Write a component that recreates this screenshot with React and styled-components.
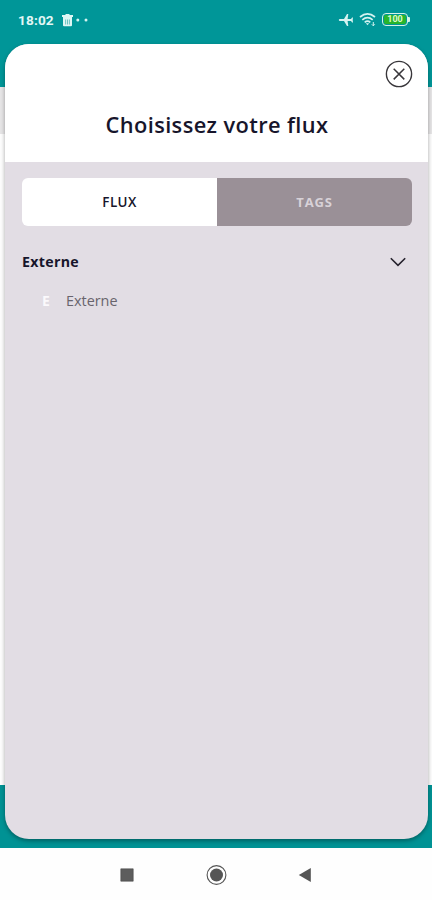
import React from 'react';
import styled, { createGlobalStyle } from 'styled-components';

const GlobalStyle = createGlobalStyle`
  * { box-sizing: border-box; }
  body { margin: 0; background: #fefefe; font-family: "Open Sans", "Noto Sans", sans-serif; }
  button { border: 0; padding: 0; background: none; font: inherit; cursor: pointer; }
  svg { display: block; }
`;

const Phone = styled.div`
  position: relative;
  width: 432px;
  height: 900px;
  overflow: hidden;
  display: flex;
  flex-direction: column;
`;

const AppHeader = styled.header`
  height: 87px;
  background: #009698;
`;

const StatusBar = styled.div`
  height: 39px;
  padding: 0 22px 0 18px;
  display: flex;
  align-items: center;
  justify-content: space-between;
  color: #e2f7f5;
`;

const StatusGroup = styled.div`
  display: flex;
  align-items: center;
  gap: ${({ $gap }) => $gap}px;
`;

const Clock = styled.span`
  width: 36px;
  font: 700 13.6px/20px Roboto, sans-serif;
  letter-spacing: 0.15px;
  white-space: nowrap;
`;

const Battery = styled.div`
  display: flex;
  align-items: center;
  &::after {
    content: "";
    width: 2px;
    height: 5px;
    background: #d5f3e5;
    border-radius: 0 1px 1px 0;
  }
`;

const BatteryLevel = styled.span`
  width: 26px;
  height: 13px;
  padding: 1px;
  border: 1.5px solid #d5f3e5;
  border-radius: 4px;
  background: #27b52b;
  background-clip: content-box;
  color: #dcf8cf;
  font: 700 9px/9px Roboto, sans-serif;
  text-align: center;
`;

const FilterStrip = styled.div`
  height: 47px;
  background: #e6e5e6;
`;

const Feed = styled.div`
  flex: 1;
  background: #fdfdfd;
`;

const TabBar = styled.div`
  height: 63px;
  background: #009294;
`;

const NavBar = styled.nav`
  height: 52px;
  padding: 1px 120px 0 120px;
  display: flex;
  align-items: center;
  justify-content: space-between;
  background: #fefefe;
`;

const Sheet = styled.section`
  position: absolute;
  top: 44px;
  left: 5px;
  right: 4px;
  height: 795px;
  display: flex;
  flex-direction: column;
  border-radius: 24px;
  overflow: hidden;
  background: #e2dde4;
  box-shadow: 0 2px 4px rgba(0, 0, 0, 0.34);
`;

const SheetHeader = styled.header`
  height: 118px;
  padding: 16px 15px 0 16px;
  display: flex;
  flex-direction: column;
  background: #fff;
`;

const CloseButton = styled.button`
  align-self: flex-end;
  width: 28px;
  height: 28px;
`;

const Title = styled.h1`
  margin: 22px 0 0;
  color: #17152b;
  font-size: 21.8px;
  font-weight: 640;
  line-height: 30px;
  letter-spacing: 0.4px;
  text-align: center;
  white-space: nowrap;
`;

const SheetBody = styled.div`
  padding: 16px 16px 16px 17px;
`;

const Tabs = styled.div`
  height: 48px;
  margin-bottom: 1px;
  display: grid;
  grid-template-columns: 195px 1fr;
  border-radius: 6px;
  overflow: hidden;
`;

const Tab = styled.button`
  background: ${({ $active }) => ($active ? '#fff' : '#9a9097')};
  && {
    color: ${({ $active }) => ($active ? '#17152b' : '#d8d2d8')};
    font: ${({ $active }) => ($active ? '650 13.4px' : '700 13px')}/20px "Open Sans", sans-serif;
    letter-spacing: ${({ $active }) => ($active ? '0.4px' : '0.85px')};
  }
`;

const GroupHeader = styled.div`
  height: 70px;
  padding-right: 6px;
  display: flex;
  align-items: center;
  justify-content: space-between;
`;

const GroupTitle = styled.h2`
  margin: 0;
  color: #17152b;
  font-size: 14.2px;
  font-weight: 700;
  line-height: 20px;
  letter-spacing: 0.3px;
`;

const FeedRow = styled.div`
  margin-top: -8px;
  height: 24px;
  padding-left: 16px;
  display: flex;
  align-items: center;
  gap: 12px;
`;

const Initial = styled.span`
  width: 16px;
  color: #fbf9fc;
  font-size: 14px;
  font-weight: 700;
  line-height: 20px;
  text-align: center;
`;

const FeedName = styled.span`
  color: #68646c;
  font-size: 14.4px;
  line-height: 20px;
`;

const TrashIcon = () => (
  <svg width="13" height="14" viewBox="0 0 13 14" fill="none">
    <path d="M4.5 1h4v1H12v2H1V2h3.5zM2 5h9v7.2q0 1-1 1H3q-1 0-1-1z" fill="#dff6f4" />
    <path d="M2 3.5h9v2H2z" fill="#dff6f4" />
    <path d="M4.6 6.5v5M6.5 6.5v5M8.4 6.5v5" stroke="#4fb6b5" strokeWidth="0.8" />
  </svg>
);

const DotsIcon = () => (
  <svg width="14" height="4" viewBox="0 0 14 4" fill="#d5f3f1">
    <circle cx="2.8" cy="2" r="1.5" />
    <circle cx="11" cy="2" r="1.5" />
  </svg>
);

const PlaneIcon = () => (
  <svg width="16" height="14" viewBox="0 0 16 14" fill="#d5f3f1">
    <path d="M.8 7Q.8 6 2 6h4L9 .9h1.3L9.6 6H13l1.1-1.6h.9L14.7 7l.3 2.6h-.9L13 8H9.6l.7 5.1H9L6 8H2Q.8 8 .8 7z" />
  </svg>
);

const WifiIcon = () => (
  <svg width="18" height="15" viewBox="0 0 18 15" fill="none" stroke="#d5f3f1" strokeWidth="1.7">
    <path d="M1 5Q8.5-1.4 16 5M3.3 7.8Q8.5 3.4 13.7 7.8M5.7 10.3Q8.5 8 11.3 10.3" />
    <path d="M6.8 11.2h3.4L8.5 13.3z" fill="#d5f3f1" stroke="none" />
    <path d="M14.3 10v3.8M12.8 12.3l1.5 1.5 1.5-1.5" strokeWidth="1" />
  </svg>
);

const CloseIcon = () => (
  <svg width="28" height="28" viewBox="0 0 28 28" fill="none" stroke="#39373b">
    <circle cx="14" cy="14" r="12.6" strokeWidth="1.4" />
    <path d="M8.7 8.8l10.6 10.6M19.3 8.8L8.7 19.4" strokeWidth="1.5" />
  </svg>
);

const ChevronIcon = () => (
  <svg width="16" height="10" viewBox="0 0 16 10" fill="none" stroke="#26222d" strokeWidth="1.6">
    <path d="M.8 1.3L8 8.4l7.2-7.1" />
  </svg>
);

const RecentsIcon = () => (
  <svg width="14" height="14" viewBox="0 0 14 14">
    <path d="M.8.8h12.4v12.4H.8z" fill="#5d5d5d" stroke="#484848" strokeWidth="0.6" />
  </svg>
);

const HomeIcon = () => (
  <svg width="22" height="22" viewBox="0 0 22 22" fill="none" stroke="#555">
    <circle cx="11.5" cy="11" r="9.4" strokeWidth="1.1" />
    <circle cx="11.5" cy="11" r="6.5" fill="#555" stroke="none" />
  </svg>
);

const BackIcon = () => (
  <svg width="14" height="16" viewBox="0 0 14 16">
    <path d="M12.8.9v14.2L.8 8z" fill="#555" />
  </svg>
);

export default function App() {
  return (
    <>
      <GlobalStyle />
      <Phone>
        <AppHeader>
          <StatusBar>
            <StatusGroup $gap={7}>
              <Clock>18:02</Clock>
              <StatusGroup $gap={1}>
                <TrashIcon />
                <DotsIcon />
              </StatusGroup>
            </StatusGroup>
            <StatusGroup $gap={5}>
              <PlaneIcon />
              <WifiIcon />
              <Battery>
                <BatteryLevel>100</BatteryLevel>
              </Battery>
            </StatusGroup>
          </StatusBar>
        </AppHeader>
        <FilterStrip />
        <Feed />
        <TabBar />
        <NavBar>
          <RecentsIcon />
          <HomeIcon />
          <BackIcon />
        </NavBar>

        <Sheet>
          <SheetHeader>
            <CloseButton aria-label="Fermer">
              <CloseIcon />
            </CloseButton>
            <Title>Choisissez votre flux</Title>
          </SheetHeader>
          <SheetBody>
            <Tabs>
              <Tab $active>FLUX</Tab>
              <Tab>TAGS</Tab>
            </Tabs>
            <GroupHeader>
              <GroupTitle>Externe</GroupTitle>
              <ChevronIcon />
            </GroupHeader>
            <FeedRow>
              <Initial>E</Initial>
              <FeedName>Externe</FeedName>
            </FeedRow>
          </SheetBody>
        </Sheet>
      </Phone>
    </>
  );
}
